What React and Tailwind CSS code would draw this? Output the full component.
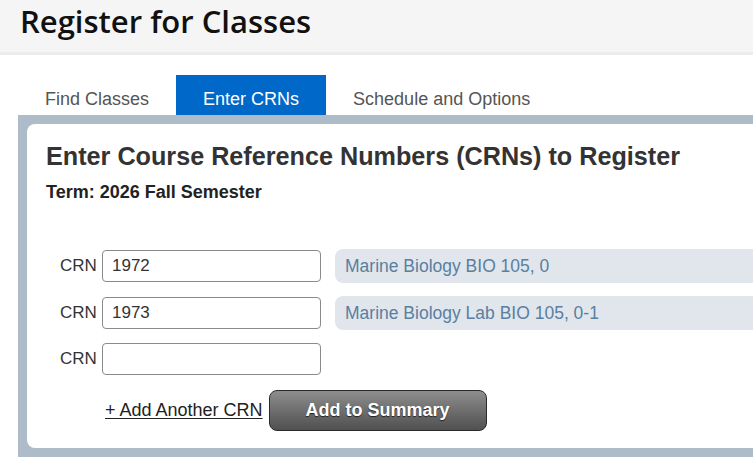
import React from "react"

const rows = [
  { crn: "1972", title: "Marine Biology BIO 105, 0" },
  { crn: "1973", title: "Marine Biology Lab BIO 105, 0-1" },
  { crn: "", title: null },
]

export default function App() {
  return (
    <div className="w-[753px] h-[460px] overflow-hidden bg-white font-['Liberation_Sans',Arial,sans-serif]">
      <header className="h-[55px] bg-[#f5f5f5] border-b-[3px] border-[#ececec] pl-5 pt-[1px]">
        <h1 className="font-['Open_Sans',sans-serif] font-semibold text-[31px] leading-[40px] text-[#111]">
          Register for Classes
        </h1>
      </header>

      <nav className="flex mt-5 ml-[18px] text-[18px]">
        <a className="h-10 px-[27px] pt-[14px] leading-5 text-[#555]">Find Classes</a>
        <a className="h-10 px-[27px] pt-[14px] leading-5 bg-[#0068c8] text-white">Enter CRNs</a>
        <a className="h-10 px-[27px] pt-[14px] leading-5 text-[#555]">Schedule and Options</a>
      </nav>

      <div className="ml-[18px] w-[780px] bg-[#aebbc9] p-[9px]">
        <div className="bg-white rounded-lg pl-[19px] pt-[18px] pb-[17px]">
          <h2 className="text-[25.2px] leading-[29px] font-bold text-[#333]">
            Enter Course Reference Numbers (CRNs) to Register
          </h2>
          <p className="mt-[11px] text-[18px] leading-[21px] font-bold text-[#222]">
            Term: 2026 Fall Semester
          </p>

          <div className="mt-[46px] ml-[14px] flex flex-col gap-[13px] text-[17px]">
            {rows.map((r, i) => (
              <div key={i} className="flex items-center">
                <label className="text-[#333] w-[42px]">CRN</label>
                <input
                  defaultValue={r.crn}
                  className="w-[219px] h-8 rounded border border-[#8a8a8a] px-[9px] text-[#333] outline-none"
                />
                {r.title && (
                  <div className="ml-[14px] w-[440px] h-[34px] rounded-lg bg-[#e1e6ed] pl-[10px] flex items-center text-[17.5px] text-[#5a7fa0]">
                    {r.title}
                  </div>
                )}
              </div>
            ))}

            <div className="mt-[2px] pl-[45px] flex items-center gap-[6px]">
              <a className="underline underline-offset-2 text-[18px] text-[#222]">+ Add Another CRN</a>
              <button className="w-[218px] h-[41px] rounded-lg border border-[#2a2a2a] bg-gradient-to-b from-[#8e8e8e] to-[#505050] text-white font-bold text-[18px] [text-shadow:0_1px_1px_#222]">
                Add to Summary
              </button>
            </div>
          </div>
        </div>
      </div>
    </div>
  )
}
